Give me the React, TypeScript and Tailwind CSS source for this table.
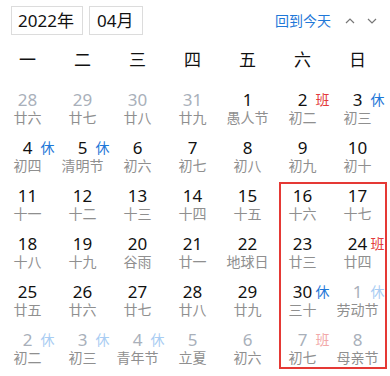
type Day = {
  n: number;
  l: string;
  other?: boolean;
  tag?: "休" | "班";
};

const rows: Day[][] = [
  [
    { n: 28, l: "廿六", other: true },
    { n: 29, l: "廿七", other: true },
    { n: 30, l: "廿八", other: true },
    { n: 31, l: "廿九", other: true },
    { n: 1, l: "愚人节" },
    { n: 2, l: "初二", tag: "班" },
    { n: 3, l: "初三", tag: "休" },
  ],
  [
    { n: 4, l: "初四", tag: "休" },
    { n: 5, l: "清明节", tag: "休" },
    { n: 6, l: "初六" },
    { n: 7, l: "初七" },
    { n: 8, l: "初八" },
    { n: 9, l: "初九" },
    { n: 10, l: "初十" },
  ],
  [
    { n: 11, l: "十一" },
    { n: 12, l: "十二" },
    { n: 13, l: "十三" },
    { n: 14, l: "十四" },
    { n: 15, l: "十五" },
    { n: 16, l: "十六" },
    { n: 17, l: "十七" },
  ],
  [
    { n: 18, l: "十八" },
    { n: 19, l: "十九" },
    { n: 20, l: "谷雨" },
    { n: 21, l: "廿一" },
    { n: 22, l: "地球日" },
    { n: 23, l: "廿三" },
    { n: 24, l: "廿四", tag: "班" },
  ],
  [
    { n: 25, l: "廿五" },
    { n: 26, l: "廿六" },
    { n: 27, l: "廿七" },
    { n: 28, l: "廿八" },
    { n: 29, l: "廿九" },
    { n: 30, l: "三十", tag: "休" },
    { n: 1, l: "劳动节", other: true, tag: "休" },
  ],
  [
    { n: 2, l: "初二", other: true, tag: "休" },
    { n: 3, l: "初三", other: true, tag: "休" },
    { n: 4, l: "青年节", other: true, tag: "休" },
    { n: 5, l: "立夏", other: true },
    { n: 6, l: "初六", other: true },
    { n: 7, l: "初七", other: true, tag: "班" },
    { n: 8, l: "母亲节", other: true },
  ],
];

const weekdays = ["一", "二", "三", "四", "五", "六", "日"];

const tagColor = (d: Day) => {
  if (d.tag === "休") return d.other ? "text-[#a9cdf3]" : "text-[#1f78d8]";
  return d.other ? "text-[#f2a9a9]" : "text-[#e33b3b]";
};

const Cell = ({ d }: { d: Day }) => (
  <div className="relative h-[48px] flex flex-col items-center pt-[5px]">
    <span
      className={`text-[17px] leading-[20px] ${
        d.other ? "text-[#a9b0ba]" : "text-[#111]"
      }`}
    >
      {d.n}
    </span>
    <span className="text-[14px] leading-[16px] text-[#8f8f8f]">{d.l}</span>
    {d.tag && (
      <span
        className={`absolute left-[calc(50%+13px)] top-[6px] text-[14px] leading-[18px] ${tagColor(d)}`}
      >
        {d.tag}
      </span>
    )}
  </div>
);

export default function App() {
  return (
    <div
      className="relative w-[390px] h-[376px] bg-white overflow-hidden"
      style={{ fontFamily: '"Noto Sans", "Noto Sans CJK SC", sans-serif' }}
    >
      <div className="flex items-center h-[37px] pl-[11px] pt-[4px] pr-[12px]">
        <div className="w-[72px] h-[29px] border border-[#dcdcdc] flex items-center pl-[6px] text-[17px] text-[#111]">
          2022年
        </div>
        <div className="ml-[6px] w-[54px] h-[29px] border border-[#dcdcdc] flex items-center pl-[7px] text-[17px] text-[#111]">
          04月
        </div>
        <div className="ml-auto flex items-center">
          <span className="text-[14px] text-[#1f78d8]">回到今天</span>
          <svg
            className="ml-[13px]"
            width="12"
            height="12"
            viewBox="0 0 12 12"
            fill="none"
            stroke="#777"
            strokeWidth="1.2"
          >
            <path d="M2 8l4-4 4 4" />
          </svg>
          <svg
            className="ml-[10px]"
            width="12"
            height="12"
            viewBox="0 0 12 12"
            fill="none"
            stroke="#777"
            strokeWidth="1.2"
          >
            <path d="M2 4l4 4 4-4" />
          </svg>
        </div>
      </div>

      <div className="grid grid-cols-[repeat(7,55px)] mt-[8px] h-[30px] items-center">
        {weekdays.map((w) => (
          <div key={w} className="text-center text-[17px] text-[#111]">
            {w}
          </div>
        ))}
      </div>

      <div className="grid grid-cols-[repeat(7,55px)] mt-[10px]">
        {rows.flat().map((d, i) => (
          <Cell key={i} d={d} />
        ))}
      </div>

      <div className="absolute left-[279px] top-[182px] w-[108px] h-[187px] border-2 border-[#e53935]" />
    </div>
  );
}
